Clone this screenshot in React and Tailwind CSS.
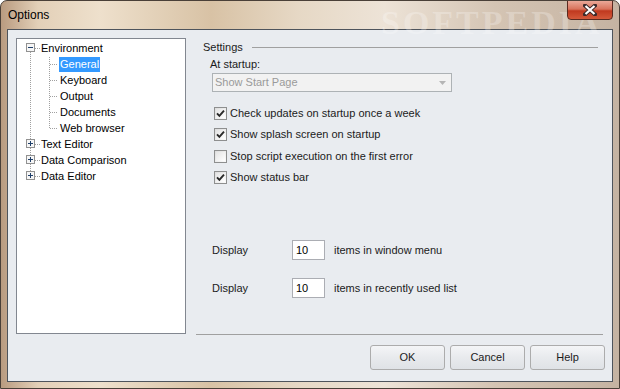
import React from 'react'

const font = "font-['Liberation_Sans',Arial,sans-serif]"

function CheckBox({ checked }){
  return (
    <span className="w-[13px] h-[13px] border border-[#8e8f8f] bg-[linear-gradient(135deg,#dcdcdc,#fbfbfb)] flex items-center justify-center shrink-0">
      <span className="w-[9px] h-[9px] bg-[linear-gradient(135deg,#e4e4e4,#ffffff)] flex items-center justify-center">
        {checked && (
          <svg width="9" height="9" viewBox="0 0 9 9">
            <path d="M1 4.3 L3.4 6.8 L8 1.6" fill="none" stroke="#2a2a2a" strokeWidth="1.9" />
          </svg>
        )}
      </span>
    </span>
  )
}

function CheckRow({ checked, label, extra }){
  return (
    <div className={'h-[21px] flex items-center pl-[18px] ' + (extra || '')}>
      <CheckBox checked={checked} />
      <span className="ml-[3px] text-[11px] text-[#1b1b1b]">{label}</span>
    </div>
  )
}

function TreeLines(){
  const dot = { stroke: '#a0a0a0', strokeDasharray: '1 1', strokeWidth: 1 }
  const box = (y, minus) => (
    <g key={y}>
      <rect x="9.5" y={y - 4.5} width="8" height="8" fill="#f6f6f6" stroke="#919191" />
      <line x1="11" y1={y - 0.5} x2="16" y2={y - 0.5} stroke="#1f3f6a" />
      {!minus && <line x1="13.5" y1={y - 3} x2="13.5" y2={y + 2} stroke="#1f3f6a" />}
    </g>
  )
  return (
    <svg className="absolute left-0 top-[1px]" width="60" height="150">
      <line x1="13.5" y1="12" x2="13.5" y2="136" style={dot} />
      <line x1="32.5" y1="17" x2="32.5" y2="88" style={dot} />
      {[8, 104, 120, 136].map(y => <line key={'h' + y} x1="18" y1={y + 0.5} x2="23" y2={y + 0.5} style={dot} />)}
      {[24, 40, 56, 72, 88].map(y => <line key={'c' + y} x1="33" y1={y + 0.5} x2="41" y2={y + 0.5} style={dot} />)}
      {box(8, true)}
      {box(104)}
      {box(120)}
      {box(136)}
    </svg>
  )
}

function Tree(){
  const top = 'h-[16px] flex items-center pl-[24px] text-[11px] text-black'
  const child = 'h-[16px] flex items-center pl-[42px] text-[11px] text-black'
  return (
    <div className="w-[170px] h-[296px] border border-[#828790] bg-white relative">
      <TreeLines />
      <div className="relative pt-[1px]">
        <div className={top}>Environment</div>
        <div className={child}><span className="bg-[#3399ff] text-white px-[1px] h-[15px] leading-[15px] mt-[1px]">General</span></div>
        <div className={child}><span className="px-[1px]">Keyboard</span></div>
        <div className={child}><span className="px-[1px]">Output</span></div>
        <div className={child}><span className="px-[1px]">Documents</span></div>
        <div className={child}><span className="px-[1px]">Web browser</span></div>
        <div className={top}>Text Editor</div>
        <div className={top}>Data Comparison</div>
        <div className={top}>Data Editor</div>
      </div>
    </div>
  )
}

function Btn({ children }){
  return (
    <button className="w-[75px] h-[25px] rounded-[3px] border border-[#acacac] bg-[linear-gradient(#f4f5f7,#e8eaed_50%,#dfe2e6)] text-[11px] text-[#1b1b1b] flex items-center justify-center">
      {children}
    </button>
  )
}

function DisplayRow({ text, extra }){
  return (
    <div className={'h-[20px] flex items-center pl-[16px] ' + (extra || '')}>
      <span className="w-[80px] text-[11px] text-[#1b1b1b]">Display</span>
      <div className="w-[33px] h-[20px] border border-[#abadb3] bg-white text-[11px] text-black flex items-center pl-[3px]">10</div>
      <span className="ml-[9px] text-[11px] text-[#1b1b1b]">{text}</span>
    </div>
  )
}

export default function App(){
  return (
    <div className={'w-[620px] h-[389px] relative rounded-t-[7px] border border-[#4a4038] flex flex-col overflow-hidden bg-[linear-gradient(90deg,#b99b80_0%,#e3d0b8_6%,#eee0cc_16%,#d8c2a5_34%,#e6d8c5_48%,#ede3d7_62%,#d4c4b3_80%,#c5b3a2_100%)] ' + font}>
      <div className="h-[28px] shrink-0 flex items-center pl-[7px] relative">
        <span className="text-[12px] text-black">Options</span>
        <span className="absolute left-[380px] top-[-4px] text-[34px] font-bold tracking-[3px] text-white/25 font-['Liberation_Serif',serif]">SOFTPEDIA</span>
        <div className="absolute right-[6px] top-[-1px] w-[46px] h-[20px] rounded-b-[4px] border border-[#5a2a20] bg-[linear-gradient(#eaa898,#d8735c_45%,#c0391f_55%,#d4593a)] flex items-center justify-center">
          <svg width="14" height="12" viewBox="0 0 14 12">
            <path d="M2 1.5 L12 10.5 M12 1.5 L2 10.5" stroke="#3b2a2a" strokeWidth="4" strokeLinecap="square" />
            <path d="M2.5 2 L11.5 10 M11.5 2 L2.5 10" stroke="#ffffff" strokeWidth="2.2" />
          </svg>
        </div>
      </div>
      <div className="mx-[6px] mb-[6px] flex-1 border border-[#4e545c] bg-[#e9ecf0] flex flex-col">
        <div className="flex mt-[8px] ml-[8px]">
          <Tree />
          <div className="ml-[10px] w-[407px] h-[297px] border-b border-[#a0a0a0] flex flex-col">
            <div className="h-[18px] flex items-center pl-[7px] pr-[5px]">
              <span className="text-[11px] text-[#1b1b1b]">Settings</span>
              <div className="flex-1 h-px bg-[#a0a0a0] ml-[9px]" />
            </div>
            <div className="h-[17px] flex items-center pl-[14px] text-[11px] text-[#1b1b1b]">At startup:</div>
            <div className="ml-[16px] w-[240px] h-[19px] border border-[#adb2b5] bg-[#f2f2f2] flex items-center justify-between pl-[2px] pr-[5px]">
              <span className="text-[11px] text-[#9a9a9a]">Show Start Page</span>
              <svg width="7" height="4" viewBox="0 0 7 4"><path d="M0 0 L7 0 L3.5 4 Z" fill="#b5b5b5" /></svg>
            </div>
            <div className="mt-[11px] flex flex-col">
              <CheckRow checked label="Check updates on startup once a week" />
              <CheckRow checked label="Show splash screen on startup" />
              <CheckRow label="Stop script execution on the first error" extra="mt-[1px]" />
              <CheckRow checked label="Show status bar" />
            </div>
            <DisplayRow text="items in window menu" extra="mt-[52px]" />
            <DisplayRow text="items in recently used list" extra="mt-[18px]" />
          </div>
        </div>
        <div className="flex justify-end gap-[5px] mt-[10px] mr-[7px]">
          <Btn>OK</Btn>
          <Btn>Cancel</Btn>
          <Btn>Help</Btn>
        </div>
      </div>
    </div>
  )
}
